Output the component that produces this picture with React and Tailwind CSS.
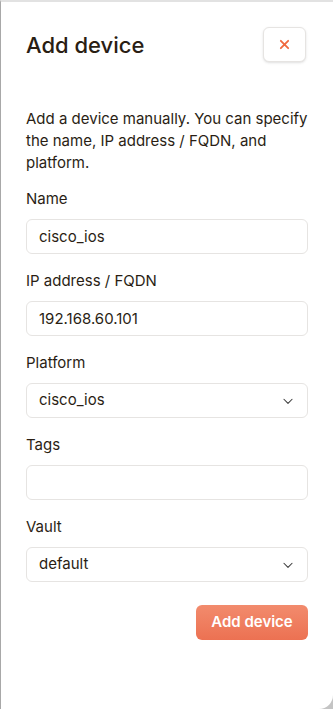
import React from 'react';

const inputCls =
  'w-full h-[35px] rounded-md border border-[#e6e4e2] bg-white px-3 text-[15px] text-[#2a1e14] outline-none';

function Chevron() {
  return (
    <svg width="14" height="14" viewBox="0 0 24 24" fill="none" stroke="#3a3a3a" strokeWidth="1.8" strokeLinecap="round" strokeLinejoin="round">
      <path d="M5 9l7 7 7-7" />
    </svg>
  );
}

function Field({ label, children }) {
  return (
    <div className="flex flex-col">
      <label className="mb-[9px] text-[15px] leading-[22px] text-[#2a1e14]">{label}</label>
      {children}
    </div>
  );
}

function Select({ value }) {
  return (
    <div className={inputCls + ' flex items-center justify-between pr-[12px]'}>
      <span>{value}</span>
      <Chevron />
    </div>
  );
}

export default function App() {
  return (
    <div className="w-[333px] h-[709px] bg-[#c4c4c4]" style={{ fontFamily: 'Inter, "Noto Sans", sans-serif' }}>
      <div className="h-full w-full bg-white border-l border-l-[#a8a8a8] border-t-2 border-t-[#e2e2e2] rounded-br-[14px] pl-[25px] pr-[25px]">
        <div className="flex items-center justify-between pt-[25px]">
          <h1 className="text-[22px] font-medium text-[#2a1e14] leading-[28px]">Add device</h1>
          <button className="mr-[2px] w-[43px] h-[35px] rounded-md border border-[#e6e4e2] bg-white shadow-sm flex items-center justify-center">
            <svg width="11" height="11" viewBox="0 0 12 12" stroke="#f0693f" strokeWidth="2" strokeLinecap="round">
              <path d="M2 2l8 8M10 2l-8 8" />
            </svg>
          </button>
        </div>
        <p className="mt-[46px] text-[15px] leading-[22px] text-[#2a1e14]">
          Add a device manually. You can specify the name, IP address / FQDN, and platform.
        </p>
        <div className="mt-[14px] flex flex-col gap-4">
          <Field label="Name">
            <input className={inputCls} defaultValue="cisco_ios" />
          </Field>
          <Field label="IP address / FQDN">
            <input className={inputCls} defaultValue="192.168.60.101" />
          </Field>
          <Field label="Platform">
            <Select value="cisco_ios" />
          </Field>
          <Field label="Tags">
            <input className={inputCls} defaultValue="" />
          </Field>
          <Field label="Vault">
            <Select value="default" />
          </Field>
        </div>
        <div className="mt-[23px] flex justify-end">
          <button className="w-[112px] h-[35px] rounded-md bg-gradient-to-b from-[#f28b6d] to-[#ec7152] text-white text-[15px] font-semibold">
            Add device
          </button>
        </div>
      </div>
    </div>
  );
}
